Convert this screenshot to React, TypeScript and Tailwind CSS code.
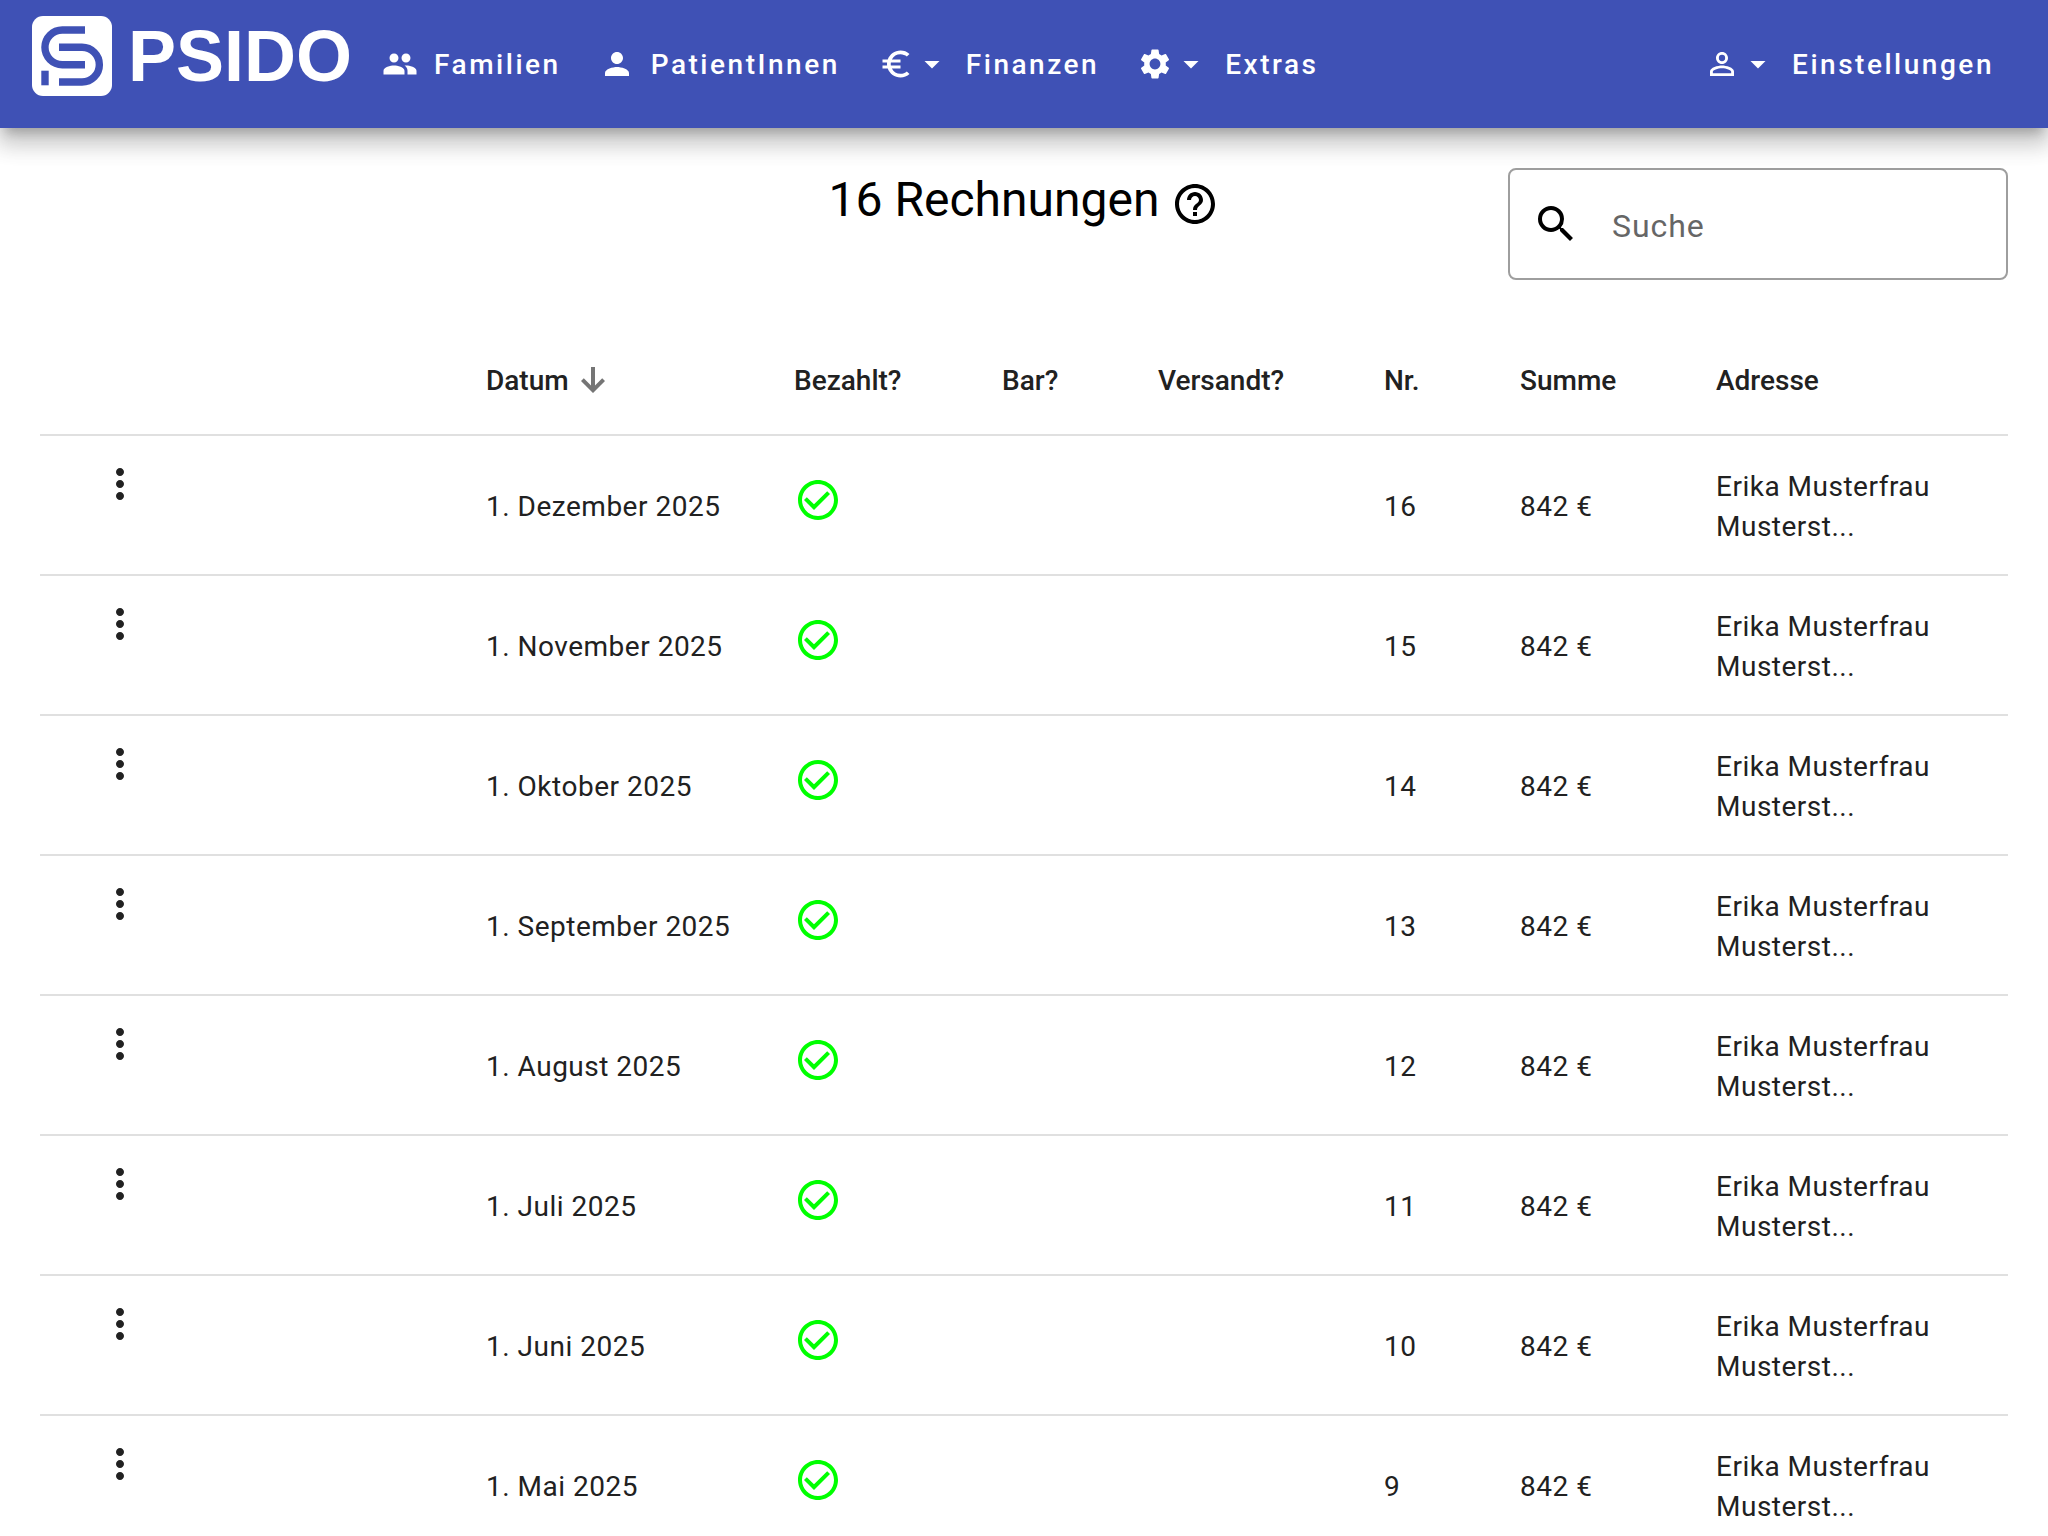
import type { ReactNode } from "react";
import {
  MdArrowDropDown,
  MdCheckCircleOutline,
  MdEuroSymbol,
  MdGroup,
  MdHelpOutline,
  MdMoreVert,
  MdPerson,
  MdPersonOutline,
  MdSearch,
  MdSettings,
} from "react-icons/md";

type Invoice = { nr: number; date: string; sum: string; name: string; street: string };

const months = ["Dezember", "November", "Oktober", "September", "August", "Juli", "Juni", "Mai"];

const invoices: Invoice[] = months.map((month, i) => ({
  nr: 16 - i,
  date: `1. ${month} 2025`,
  sum: "842 €",
  name: "Erika Musterfrau",
  street: "Musterst...",
}));

const headings = ["Bezahlt?", "Bar?", "Versandt?", "Nr.", "Summe", "Adresse"];

const line = "border-b-2 border-[#e0e0e0]";

function Logo() {
  return (
    <a href="#" aria-label="PSIDO" className="flex h-20 items-center gap-4">
      <svg viewBox="0 0 80 80" className="size-20 shrink-0" aria-hidden="true">
        <rect width="80" height="80" rx="11" fill="#fff" />
        <g fill="none" stroke="#3f51b5" strokeWidth="7.4">
          <path d="M53 14H30.3a17.35 17.35 0 0 0 0 34.7H53" />
          <path d="M27 31.3H50a17.35 17.35 0 0 1 0 34.7H27" />
          <path d="M13 54.7V69.3" />
        </g>
      </svg>
      <span className="font-['Liberation_Sans',sans-serif] text-[72px] leading-20 font-bold">PSIDO</span>
    </a>
  );
}

function NavButton({ icon, label, menu = false }: { icon: ReactNode; label: string; menu?: boolean }) {
  return (
    <button
      type="button"
      aria-haspopup={menu ? "menu" : undefined}
      className="flex h-18 items-center px-4.5 text-[28px] font-medium tracking-[0.09em]"
    >
      <span className="flex text-[36px]">{icon}</span>
      {menu && <MdArrowDropDown className="text-[36px]" />}
      <span className="ml-4 pt-0.5">{label}</span>
    </button>
  );
}

function SortArrow() {
  return (
    <svg viewBox="0 -960 960 960" className="size-12 rotate-180 fill-[#757575]" aria-hidden="true">
      <path d="M440-240v-368L296-464l-56-56 240-240 240 240-56 56-144-144v368h-80Z" />
    </svg>
  );
}

export default function App() {
  return (
    <div className="h-screen overflow-hidden bg-white font-[Roboto,sans-serif] text-[#212121]">
      <header className="flex h-32 items-center bg-[#3f51b5] pr-9 pl-8 text-white shadow-[0_10px_10px_-6px_rgba(0,0,0,0.2),0_16px_20px_2px_rgba(0,0,0,0.14),0_6px_28px_4px_rgba(0,0,0,0.12)]">
        <div className="self-start pt-4">
          <Logo />
        </div>
        <nav className="flex grow items-center gap-0.5 pl-3">
          <NavButton icon={<MdGroup />} label="Familien" />
          <NavButton icon={<MdPerson />} label="PatientInnen" />
          <NavButton icon={<MdEuroSymbol />} label="Finanzen" menu />
          <NavButton icon={<MdSettings />} label="Extras" menu />
          <div className="grow" />
          <NavButton icon={<MdPersonOutline />} label="Einstellungen" menu />
        </nav>
      </header>

      <main className="px-10 pt-10">
        <div className="grid grid-cols-[1fr_auto_1fr] items-start">
          <h1 className="col-start-2 flex items-center gap-3 text-[48px] leading-16 text-black">
            16 Rechnungen
            <button type="button" aria-label="Hilfe" className="pt-2">
              <MdHelpOutline className="size-12" />
            </button>
          </h1>
          <label className="flex h-28 w-[500px] items-center justify-self-end rounded-lg border-2 border-[#9e9e9e] pr-6 pl-[22px]">
            <MdSearch className="size-12 shrink-0 text-black" />
            <input
              type="search"
              aria-label="Suche"
              placeholder="Suche"
              className="ml-8 min-w-0 grow bg-transparent pt-1 text-[32px] tracking-[0.03em] outline-none placeholder:text-[#666666]"
            />
          </label>
        </div>

        <table className="mt-11 w-full table-fixed border-separate border-spacing-0 text-left text-[28px] leading-10 tracking-[0.018em]">
          <colgroup>
            <col />
            <col className="w-[308px]" />
            <col className="w-[208px]" />
            <col className="w-[156px]" />
            <col className="w-[226px]" />
            <col className="w-[136px]" />
            <col className="w-[196px]" />
            <col className="w-[324px]" />
          </colgroup>
          <thead>
            <tr className="h-28 tracking-normal">
              <td className={line} />
              <th scope="col" aria-sort="descending" className={`${line} px-8 font-medium`}>
                <button type="button" className="flex items-center tracking-normal">
                  <span className="pt-1">Datum</span>
                  <SortArrow />
                </button>
              </th>
              {headings.map((heading) => (
                <th key={heading} scope="col" className={`${line} px-8 pt-1 font-medium`}>
                  {heading}
                </th>
              ))}
            </tr>
          </thead>
          <tbody>
            {invoices.map((inv) => (
              <tr key={inv.nr} className="h-35">
                <td className={`${line} px-8 align-top`}>
                  <button
                    type="button"
                    aria-label={`Aktionen für Rechnung ${inv.nr}`}
                    className="flex size-24 items-center justify-center"
                  >
                    <MdMoreVert className="size-12" />
                  </button>
                </td>
                <td className={`${line} px-8 pt-1 whitespace-nowrap`}>{inv.date}</td>
                <td className={`${line} px-8 pb-2.5`}>
                  <MdCheckCircleOutline className="size-12 text-[#00ff00]" role="img" aria-label="bezahlt" />
                </td>
                <td className={line} />
                <td className={line} />
                <td className={`${line} px-8 pt-1`}>{inv.nr}</td>
                <td className={`${line} px-8 pt-1 whitespace-nowrap`}>{inv.sum}</td>
                <td className={`${line} px-8 pt-1`}>
                  {inv.name}
                  <br />
                  {inv.street}
                </td>
              </tr>
            ))}
          </tbody>
        </table>
      </main>
    </div>
  );
}
